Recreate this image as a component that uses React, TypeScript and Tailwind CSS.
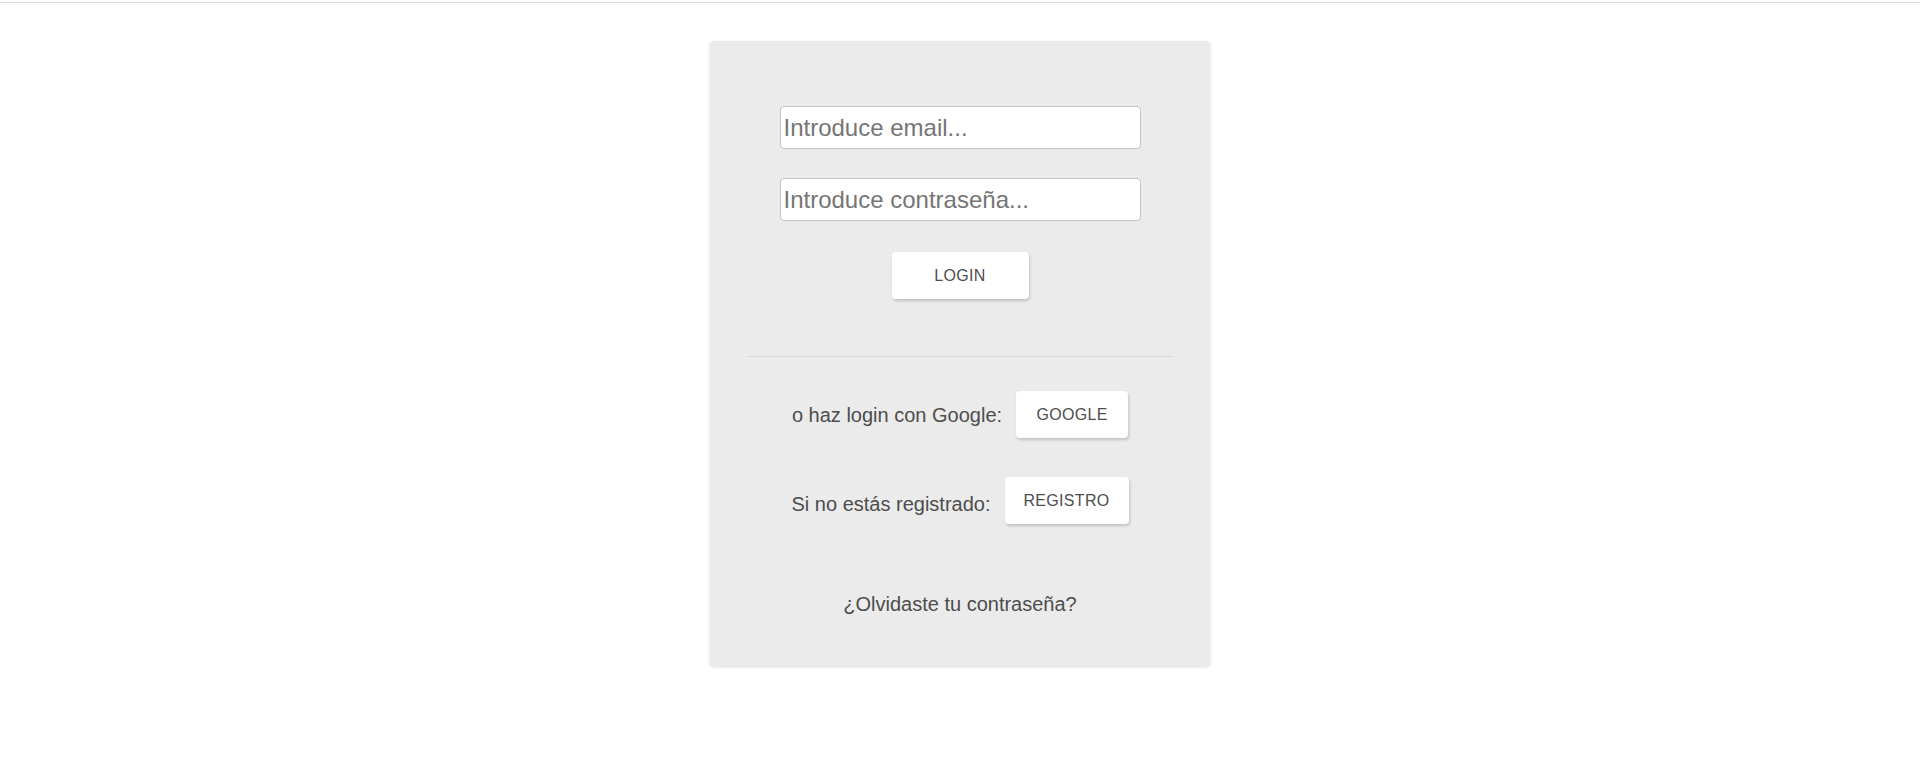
import React from "react";

export default function App() {
  const btn =
    "bg-white rounded-[4px] h-[47px] text-[16px] tracking-[0.3px] text-[#4d4d4d] shadow-[1px_2px_3px_rgba(0,0,0,0.18)] flex items-center justify-center";
  return (
    <div className="min-h-screen bg-white font-['Liberation_Sans',Arial,sans-serif] text-[#4d4d4d]">
      <div className="h-[3px] border-b border-[#dcdcdc]" />
      <div className="flex justify-center pt-[38px]">
        <div className="w-[500px] h-[625px] rounded-[4px] bg-[#ebebeb] shadow-[0_1px_3px_rgba(0,0,0,0.15)] flex flex-col items-center pt-[65px]">
          <input
            type="email"
            placeholder="Introduce email..."
            className="w-[361px] h-[43px] bg-white border border-[#c4c4c4] rounded-[4px] px-[3px] text-[24px] placeholder:text-[#757575] outline-none"
          />
          <input
            type="password"
            placeholder="Introduce contraseña..."
            className="mt-[29px] w-[361px] h-[43px] bg-white border border-[#c4c4c4] rounded-[4px] px-[3px] text-[24px] placeholder:text-[#757575] outline-none"
          />
          <button className={`${btn} mt-[31px] w-[137px]`}>LOGIN</button>
          <div className="mt-[57px] w-[425px] h-px bg-[#d8d8d8]" />
          <div className="mt-[34px] flex items-center gap-[14px]">
            <span className="text-[20px]">o haz login con Google:</span>
            <button className={`${btn} w-[112px]`}>GOOGLE</button>
          </div>
          <div className="mt-[39px] flex items-center gap-[14px]">
            <span className="text-[20px] mt-[6px]">Si no estás registrado:</span>
            <button className={`${btn} w-[124px]`}>REGISTRO</button>
          </div>
          <div className="mt-[68px] text-[20px] leading-[24px]">¿Olvidaste tu contraseña?</div>
        </div>
      </div>
    </div>
  );
}
